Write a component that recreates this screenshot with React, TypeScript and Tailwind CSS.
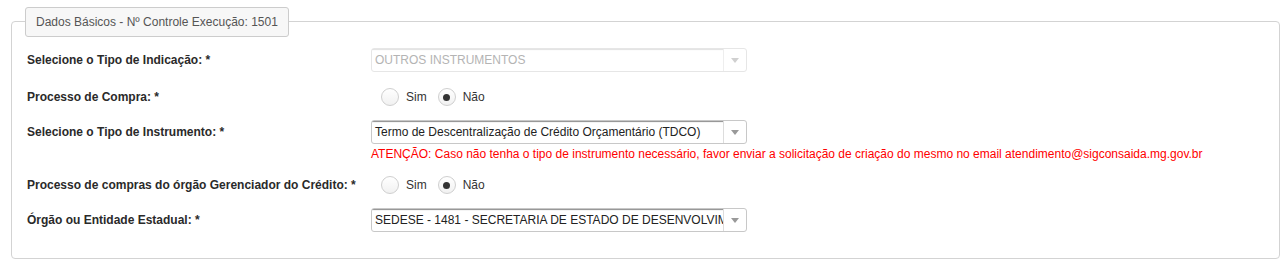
import React from 'react';

const font = { fontFamily: '"Liberation Sans", Arial, sans-serif' };

const Arrow: React.FC<{ disabled?: boolean }> = ({ disabled }) => (
  <div className={`flex w-[23px] items-center justify-center border-l ${disabled ? 'border-[#eeeeee]' : 'border-[#dddddd]'}`}>
    <svg width="8" height="5" viewBox="0 0 8 5">
      <path d="M0 0h8L4 5z" fill={disabled ? '#d0d0d0' : '#999999'} />
    </svg>
  </div>
);

interface SelectProps {
  value: string;
  disabled?: boolean;
}

const Select: React.FC<SelectProps> = ({ value, disabled }) => (
  <div
    className={`flex h-[24px] w-[376px] overflow-hidden rounded-[3px] border bg-white ${
      disabled ? 'border-[#e6e6e6]' : 'border-[#c8c8c8]'
    }`}
  >
    <div
      className={`flex min-w-0 flex-1 items-center whitespace-nowrap overflow-hidden pl-[3px] ${
        disabled
          ? 'text-[#b4b4b4] shadow-[inset_0_2px_1px_-1px_rgba(0,0,0,0.12)]'
          : 'text-[#222222] shadow-[inset_0_2px_1px_-1px_rgba(0,0,0,0.45)]'
      }`}
    >
      {value}
    </div>
    <Arrow disabled={disabled} />
  </div>
);

const Radio: React.FC<{ checked?: boolean; label: string }> = ({ checked, label }) => (
  <label className="flex items-center">
    <span className="flex h-[18px] w-[18px] items-center justify-center rounded-full border border-[#cfcfcf] bg-gradient-to-b from-white to-[#f1f1f1]">
      {checked && <span className="h-[7px] w-[7px] rounded-full bg-[#333333]" />}
    </span>
    <span className="ml-[7px] text-[#333333]">{label}</span>
  </label>
);

const Radios: React.FC = () => (
  <div className="flex h-[24px] items-center gap-[11px] pl-[10px]">
    <Radio label="Sim" />
    <Radio label="Não" checked />
  </div>
);

const Label: React.FC<{ children: React.ReactNode }> = ({ children }) => (
  <div className="flex h-[24px] items-center font-bold text-[#2a2a2a]">{children}</div>
);

export default function App() {
  return (
    <div className="bg-white px-[11px] pt-[7px] pb-[10px] text-[12px] leading-[17px]" style={font}>
      <div className="relative z-10 ml-[14px] inline-flex h-[30px] items-center rounded-[3px] border border-[#cccccc] bg-[#f7f7f7] px-[10px] text-[#555555]">
        Dados Básicos - Nº Controle Execução: 1501
      </div>
      <div className="-mt-[16px] w-[1269px] rounded-[4px] border border-[#d3d3d3] px-[15px] pt-[26px] pb-[26px]">
        <div className="grid grid-cols-[344px_1fr]">
          <Label>Selecione o Tipo de Indicação: *</Label>
          <Select value="OUTROS INSTRUMENTOS" disabled />

          <div className="col-span-2 h-[13px]" />
          <Label>Processo de Compra: *</Label>
          <Radios />

          <div className="col-span-2 h-[11px]" />
          <Label>Selecione o Tipo de Instrumento: *</Label>
          <div>
            <Select value="Termo de Descentralização de Crédito Orçamentário (TDCO)" />
            <div className="mt-[2px] text-[#ff0000]">
              ATENÇÃO: Caso não tenha o tipo de instrumento necessário, favor enviar a solicitação de criação do mesmo no email atendimento@sigconsaida.mg.gov.br
            </div>
          </div>

          <div className="col-span-2 h-[10px]" />
          <Label>Processo de compras do órgão Gerenciador do Crédito: *</Label>
          <Radios />

          <div className="col-span-2 h-[11px]" />
          <Label>Órgão ou Entidade Estadual: *</Label>
          <Select value="SEDESE - 1481 - SECRETARIA DE ESTADO DE DESENVOLVIMENTO SOCIAL" />
        </div>
      </div>
    </div>
  );
}
